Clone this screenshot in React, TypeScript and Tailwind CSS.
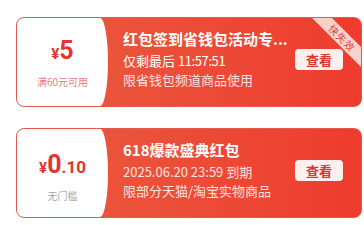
import React from 'react';

interface Coupon {
  id: string;
  amount: React.ReactNode;
  condition: string;
  conditionColor: string;
  leftPad: string;
  title: string;
  line2: React.ReactNode;
  line3: string;
  urgent?: boolean;
}

const coupons: Coupon[] = [
  {
    id: 'c1',
    amount: (
      <>
        <span className="text-[15px]">¥</span>
        <span className="text-[25px]">5</span>
      </>
    ),
    condition: '满60元可用',
    conditionColor: 'text-[#e8817a]',
    leftPad: 'pt-[2px]',
    title: '红包签到省钱包活动专...',
    line2: (
      <span className="text-white">
        仅剩最后 <span className="tracking-[-0.4px]">11:57:51</span>
      </span>
    ),
    line3: '限省钱包频道商品使用',
    urgent: true,
  },
  {
    id: 'c2',
    amount: (
      <>
        <span className="text-[15px]">¥</span>
        <span className="text-[25px]">0</span>
        <span className="text-[17px]">.10</span>
      </>
    ),
    condition: '无门槛',
    conditionColor: 'text-[#a8a8a8]',
    leftPad: 'pt-[9px]',
    title: '618爆款盛典红包',
    line2: <span className="text-white/85">2025.06.20 23:59 到期</span>,
    line3: '限部分天猫/淘宝实物商品',
  },
];

const CouponCard: React.FC<{ coupon: Coupon }> = ({ coupon }) => (
  <div className="relative flex h-[90px] w-[346px] overflow-hidden rounded-[8px] border-[1.5px] border-[#e25a4e] bg-linear-to-r from-[#e95b3f] to-[#ee3b2e]">
    <div
      className={`flex w-[91px] shrink-0 flex-col items-center justify-center rounded-tr-[8px_50%] rounded-br-[8px_50%] bg-white ${coupon.leftPad}`}
    >
      <div className="flex items-baseline font-['Roboto',sans-serif] font-bold leading-[26px] text-[#e5342d]">
        {coupon.amount}
      </div>
      <div className={`mt-[8px] text-[10px] leading-[14px] ${coupon.conditionColor}`}>
        {coupon.condition}
      </div>
    </div>

    <div className="flex flex-1 items-start pl-[15px] pr-[18px] pt-[11px]">
      <div className="min-w-0 flex-1">
        <div className="whitespace-nowrap text-[15px] font-bold leading-[20px] text-white">
          {coupon.title}
        </div>
        <div className="mt-[2px] whitespace-nowrap text-[13px] leading-[20px]">{coupon.line2}</div>
        <div className="whitespace-nowrap text-[13px] leading-[18px] text-white/85">{coupon.line3}</div>
      </div>
      <button className="mt-[20px] h-[21px] w-[48px] shrink-0 rounded-[4px] bg-[#fdf0ee] text-[13px] font-bold leading-[21px] text-[#d9362e]">
        查看
      </button>
    </div>

    {coupon.urgent && (
      <div className="absolute right-[-26px] top-[13px] flex h-[14px] w-[90px] rotate-45 items-center justify-center bg-[#fad2cd] text-[10px] leading-none tracking-[1px] text-[#e0443a]">
        快失效
      </div>
    )}
  </div>
);

const App: React.FC = () => {
  return (
    <div className="h-[225px] w-[364px] bg-white pl-4 pt-[17px] font-['Noto_Sans_CJK_SC','Noto_Sans',sans-serif]">
      <div className="flex flex-col gap-[21px]">
        {coupons.map((c) => (
          <CouponCard key={c.id} coupon={c} />
        ))}
      </div>
    </div>
  );
};

export default App;
